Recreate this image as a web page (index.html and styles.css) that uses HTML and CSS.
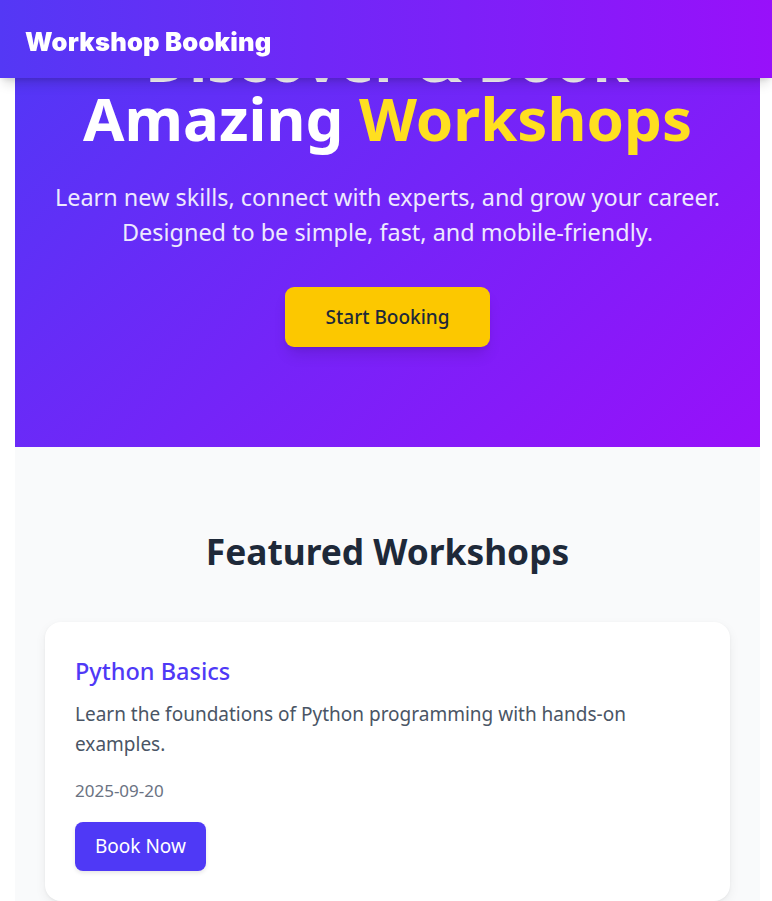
FILE: index.html
```html
<!DOCTYPE html>
<html lang="en">
<head>
<meta charset="utf-8">
<title>Workshop Booking</title>
<link rel="stylesheet" href="styles.css">
</head>
<body>
<header class="topbar">
  <span class="brand">Workshop Booking</span>
</header>
<main class="page">
  <section class="hero">
    <h1 class="hero-title">Discover &amp; Book<br>Amazing <span class="accent">Workshops</span></h1>
    <p class="hero-sub">Learn new skills, connect with experts, and grow your career.<br>Designed to be simple, fast, and mobile-friendly.</p>
    <a class="btn-start" href="#">Start Booking</a>
  </section>
  <section class="featured">
    <h2 class="featured-title">Featured Workshops</h2>
    <article class="card">
      <h3 class="card-title">Python Basics</h3>
      <p class="card-desc">Learn the foundations of Python programming with hands-on examples.</p>
      <p class="card-date">2025-09-20</p>
      <a class="btn-book" href="#">Book Now</a>
    </article>
  </section>
</main>
</body>
</html>
```
FILE: styles.css
```css
* { box-sizing: border-box; }
html, body { margin: 0; padding: 0; }
body {
  font-family: "Noto Sans", "Open Sans", sans-serif;
  background: #ffffff;
}
.topbar {
  position: fixed;
  top: 0; left: 0; right: 0;
  height: 78px;
  display: flex;
  align-items: center;
  padding: 0 25px;
  background: linear-gradient(90deg, #5438f5 0%, #9810fa 100%);
  box-shadow: 0 8px 12px -4px rgba(0,0,0,0.18), 0 3px 6px -2px rgba(0,0,0,0.1);
  z-index: 10;
}
.brand {
  color: #fff;
  font-family: "Inter", "Noto Sans", sans-serif;
  font-weight: 900;
  font-size: 25.5px;
  letter-spacing: 0.2px;
  padding-top: 4px;
}
.page {
  padding: 0 12px 0 15px;
}
.hero {
  background: linear-gradient(135deg, #4f39f6 0%, #9810fa 100%);
  text-align: center;
  padding: 30px 10px 100px;
}
.hero-title {
  margin: 0;
  color: #fff;
  font-size: 60px;
  line-height: 59px;
  font-weight: 700;
}
.accent { color: #ffdf20; }
.hero-sub {
  margin: 32px 0 37px;
  color: #ede9fe;
  font-size: 23.4px;
  line-height: 35px;
}
.btn-start {
  display: inline-block;
  width: 205px;
  height: 60px;
  line-height: 60px;
  background: #fcc800;
  color: #1e2939;
  font-size: 19px;
  font-weight: 500;
  text-decoration: none;
  border-radius: 9px;
  box-shadow: 0 10px 15px -3px rgba(0,0,0,0.12), 0 4px 6px -4px rgba(0,0,0,0.1);
}
.featured {
  background: #f9fafb;
  padding: 83px 30px 40px;
}
.featured-title {
  margin: 0 0 49px;
  text-align: center;
  color: #1e2939;
  font-size: 35.3px;
  line-height: 43px;
  font-weight: 700;
}
.card {
  background: #fff;
  border-radius: 16px;
  padding: 35px 30px 30px;
  box-shadow: 0 4px 12px rgba(0,0,0,0.06), 0 1px 3px rgba(0,0,0,0.05);
}
.card-title {
  margin: 0 0 13px;
  color: #4f39f6;
  font-size: 23.5px;
  line-height: 29px;
  font-weight: 500;
}
.card-desc {
  margin: 0 0 20px;
  color: #4a5565;
  font-size: 19px;
  line-height: 30px;
}
.card-date {
  margin: 0 0 19px;
  color: #6a7282;
  font-size: 17px;
  line-height: 24px;
}
.btn-book {
  display: inline-block;
  height: 49px;
  line-height: 49px;
  padding: 0 20px;
  background: #4f39f6;
  color: #fff;
  font-size: 19px;
  text-decoration: none;
  border-radius: 8px;
  box-shadow: 0 2px 4px rgba(0,0,0,0.1);
}
```
